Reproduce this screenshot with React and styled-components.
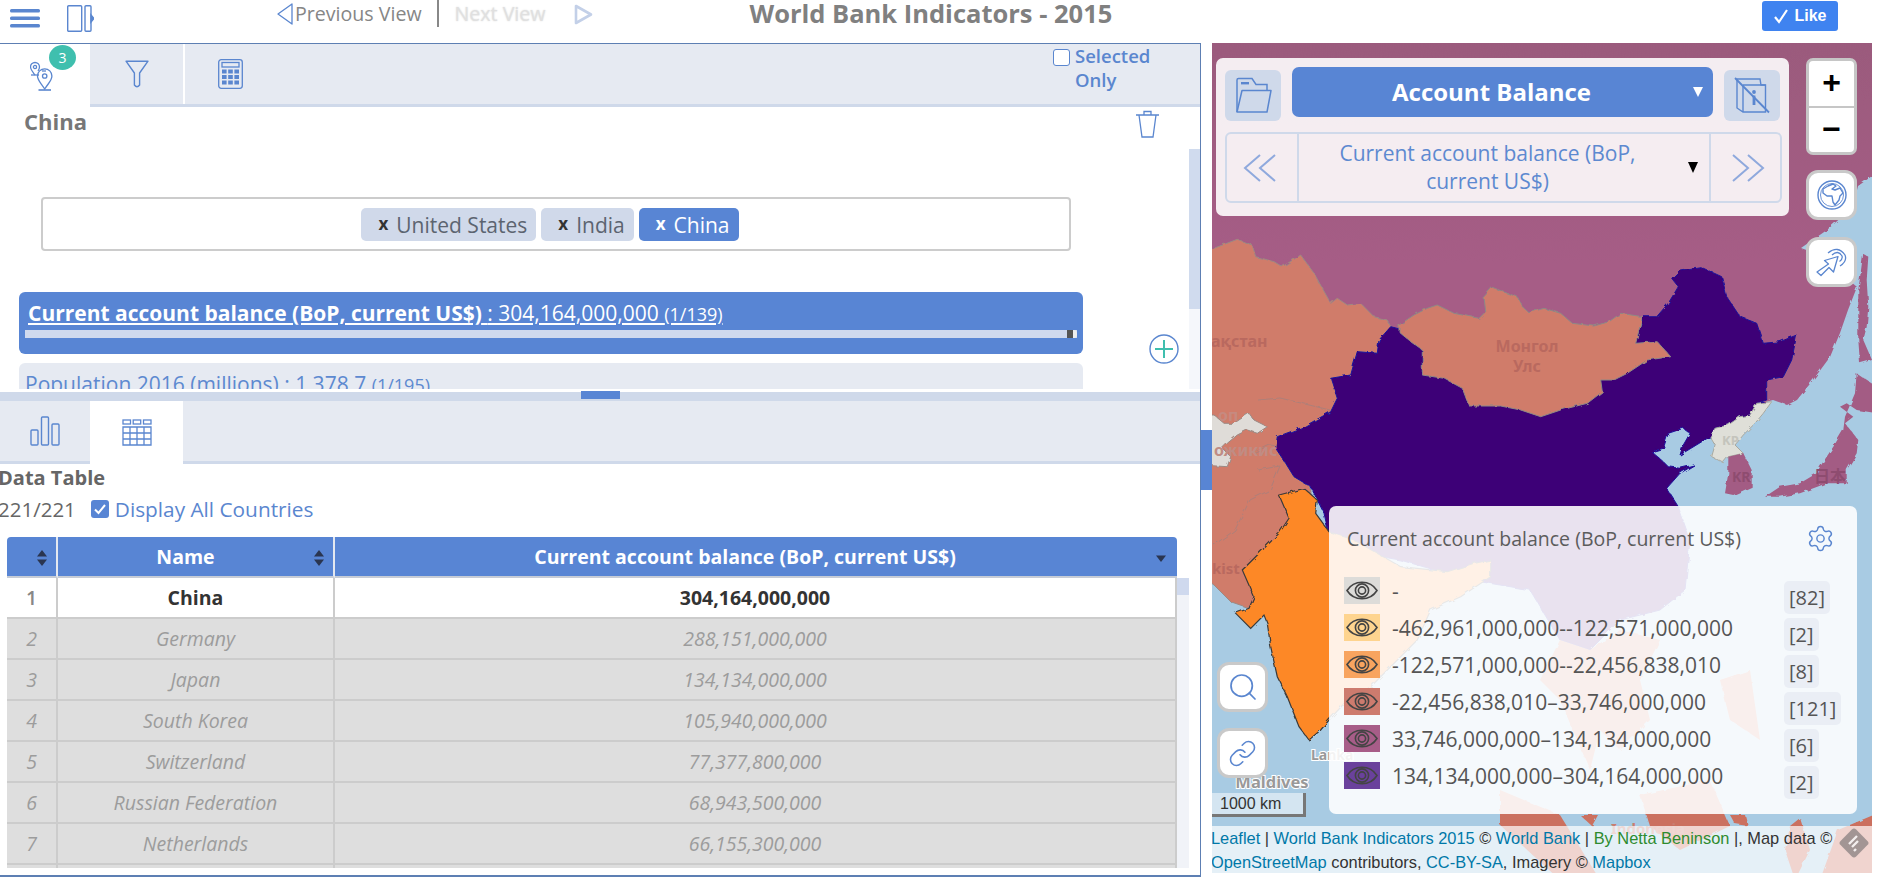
import React from 'react';
import styled, { createGlobalStyle } from 'styled-components';
import { Search, Link, Settings } from 'lucide-react';

const BLUE = '#5885d4';
const ICON = '#5a86cf';
const PALE = '#e6eaf2';
const LINE = '#cfd9ea';

const GlobalStyle = createGlobalStyle`
  html, body {
    margin: 0;
    background: #fff;
    font-family: "Open Sans", sans-serif;
    overflow: hidden;
  }
  * { box-sizing: border-box; }
`;

const Page = styled.div`
  width: 1872px;
`;

/* ---------- top bar ---------- */

const TopBar = styled.header`
  display: flex;
  align-items: flex-start;
  height: 43px;
`;

const MenuIcon = styled.svg`
  margin: 9px 0 0 10px;
`;

const ToggleIcon = styled.svg`
  margin: 5px 0 0 27px;
`;

const ViewNav = styled.nav`
  display: flex;
  align-items: flex-start;
  margin-left: 183px;
  height: 28px;
  font-size: 19.6px;
  line-height: 28px;
`;

const ViewLabel = styled.span`
  color: ${p => (p.$off ? '#e0e0e0' : '#868686')};
  ${p => p.$off && 'text-shadow: 0 0 2px #ddd;'}
`;

const ViewDivider = styled.span`
  width: 2px;
  height: 27px;
  margin: 0 16px 0 15px;
  background: #888;
`;

const PlayIcon = styled.svg`
  margin: 4px 0 0 29px;
  filter: blur(0.6px);
`;

const BackIcon = styled.svg`
  margin: 3px 2px 0 0;
`;

const Title = styled.h1`
  margin: -1px 0 0 156px;
  font-size: 25.5px;
  line-height: 28px;
  font-weight: 700;
  color: #808080;
  white-space: nowrap;
`;

const LikeButton = styled.button`
  display: flex;
  align-items: center;
  justify-content: center;
  gap: 5px;
  width: 76px;
  height: 30px;
  margin: 1px 34px 0 auto;
  padding: 0;
  border: 0;
  border-radius: 3px;
  background: #3f83f0;
  color: #fff;
  font-family: "Liberation Sans", sans-serif;
  font-size: 16px;
  font-weight: 700;
`;

/* ---------- main split ---------- */

const Main = styled.main`
  display: flex;
  align-items: flex-start;
`;

const LeftPanel = styled.section`
  width: 1201px;
  height: 834px;
  border-top: 1px solid #5d7fb3;
  border-right: 1px solid #5d7fb3;
  border-bottom: 2px solid #5d7fb3;
  overflow: hidden;
`;

const Gutter = styled.div`
  width: 11px;
  padding-top: 387px;
`;

const GutterHandle = styled.div`
  height: 60px;
  background: ${BLUE};
`;

const TabBar = styled.div`
  display: flex;
  height: 63px;
  background: ${PALE};
  border-bottom: 3px solid ${LINE};
`;

const Tab = styled.div`
  position: relative;
  display: flex;
  align-items: center;
  justify-content: center;
  width: ${p => p.$width}px;
  height: ${p => (p.$active ? 63 : 60)}px;
  background: ${p => (p.$active ? '#fff' : PALE)};
  border-right: ${p => (p.$gap ? '2px solid #fff' : '0')};
  color: ${ICON};
`;

const Badge = styled.span`
  position: absolute;
  left: 49px;
  top: 1px;
  width: 27px;
  height: 25px;
  border-radius: 50%;
  background: #3fbfae;
  color: #fff;
  font-size: 14px;
  line-height: 25px;
  text-align: center;
`;

const SelectedOnly = styled.label`
  display: flex;
  margin-left: auto;
  width: 147px;
  color: ${ICON};
  font-size: 18.5px;
  font-weight: 600;
  line-height: 24px;
`;

const EmptyBox = styled.span`
  flex: none;
  width: 17px;
  height: 17px;
  margin: 5px 5px 0 0;
  border: 1.5px solid ${ICON};
  border-radius: 3px;
  background: #fff;
`;

/* ---------- upper section ---------- */

const Upper = styled.div`
  display: flex;
  height: 282px;
  overflow: hidden;
`;

const UpperContent = styled.div`
  flex: 1;
  min-width: 0;
`;

const CountryRow = styled.div`
  display: flex;
  justify-content: space-between;
  height: 90px;
  padding: 1px 29px 0 24px;
`;

const CountryName = styled.h2`
  margin: -2px 0 0;
  font-size: 22px;
  line-height: 30px;
  font-weight: 700;
  color: #777;
`;

const TrashIcon = styled.svg`
  margin-top: 2px;
`;

const TagBox = styled.div`
  display: flex;
  justify-content: center;
  gap: 5px;
  width: 1030px;
  height: 54px;
  margin-left: 41px;
  padding-top: 9px;
  padding-right: 12px;
  border: 2px solid #ccc;
  border-radius: 4px;
`;

const Tag = styled.span`
  display: flex;
  align-items: center;
  height: 33px;
  padding: 0 9px 0 17px;
  border-radius: 5px;
  background: ${p => (p.$active ? BLUE : '#d0d9ea')};
  color: ${p => (p.$active ? '#fff' : '#5c6470')};
  font-size: 21px;
  white-space: nowrap;
`;

const TagClose = styled.b`
  margin: -3px 8px 0 0;
  font-size: 17px;
  color: ${p => (p.$active ? '#fff' : '#333')};
`;

const IndicatorArea = styled.div`
  display: flex;
  align-items: flex-start;
  margin: 41px 0 0 19px;
`;

const IndicatorList = styled.div`
  display: flex;
  flex-direction: column;
  gap: 9px;
  width: 1064px;
`;

const IndicatorCard = styled.div`
  height: 62px;
  padding: 7px 0 0 ${p => (p.$active ? 9 : 6)}px;
  border-radius: 6px;
  background: ${p => (p.$active ? BLUE : PALE)};
  color: ${p => (p.$active ? '#fff' : '#5d89d0')};
  font-size: 21px;
  line-height: 28px;
  text-decoration: ${p => (p.$active ? 'underline' : 'none')};
  white-space: nowrap;
`;

const IndicatorName = styled.b`
  font-weight: 700;
`;

const IndicatorRank = styled.small`
  font-size: 18px;
`;

const ProgressBar = styled.div`
  position: relative;
  width: 1052px;
  height: 8px;
  margin: 2px 0 0 -3px;
  background: #cfd9ee;
`;

const ProgressEnd = styled.span`
  position: absolute;
  right: 0;
  top: 0;
  width: 10px;
  height: 8px;
  background: linear-gradient(90deg, #555 0 60%, #eee 60%);
  border-radius: 0 3px 3px 0;
`;

const AddIcon = styled.svg`
  flex: none;
  margin: 42px 0 0 66px;
`;

const ScrollTrack = styled.div`
  flex: none;
  width: 11px;
  margin-top: 42px;
  background: #f5f7fb;
`;

const ScrollThumb = styled.div`
  height: 160px;
  background: #d0dbee;
`;

const Splitter = styled.div`
  position: relative;
  height: 9px;
  margin-top: 3px;
  background: ${LINE};
`;

const SplitHandle = styled.span`
  position: absolute;
  left: 581px;
  top: -1px;
  width: 39px;
  height: 8px;
  background: ${BLUE};
`;

/* ---------- data table ---------- */

const TableTitle = styled.h3`
  margin: 0 0 0 -2px;
  font-size: 20px;
  line-height: 28px;
  font-weight: 700;
  color: #666;
`;

const TableInfo = styled.div`
  display: flex;
  align-items: center;
  height: 28px;
  margin: 3px 0 14px -2px;
  font-size: 20.5px;
  color: #666;
`;

const CheckedBox = styled.svg`
  margin: 0 6px 0 15px;
`;

const InfoLabel = styled.span`
  font-size: 20.8px;
  color: ${ICON};
`;

const TableWrap = styled.div`
  display: flex;
  align-items: flex-start;
  height: 331px;
  margin-left: 7px;
  overflow: hidden;
`;

const Table = styled.table`
  flex: none;
  width: 1170px;
  table-layout: fixed;
  border-collapse: separate;
  border-spacing: 0;
  font-size: 19.5px;
`;

const HeadCell = styled.th`
  position: relative;
  height: 41px;
  padding: 0 ${p => p.$pad || 0}px 0 0;
  background: ${BLUE};
  border-bottom: 2px solid #c6ccd6;
  border-right: 2px solid #e4e8f0;
  color: #fff;
  font-size: 19.5px;
  font-weight: 700;
  &:first-child { border-top-left-radius: 4px; }
  &:last-child { border-right: 0; border-top-right-radius: 4px; }
`;

const SortIcon = styled.svg`
  position: absolute;
  right: ${p => p.$right}px;
  top: ${p => p.$top}px;
`;

const BodyCell = styled.td`
  height: 41px;
  padding: 0;
  text-align: center;
  background: ${p => (p.$top ? '#fff' : '#dedede')};
  color: ${p => (p.$top ? '#333' : '#9c9c9c')};
  font-style: ${p => (p.$top ? 'normal' : 'italic')};
  font-weight: ${p => (p.$top ? 700 : 400)};
  border-bottom: 2px solid #ccc;
  border-right: 2px solid #ccc;
  &:first-child {
    font-weight: ${p => (p.$top ? 600 : 400)};
    color: ${p => (p.$top ? '#888' : '#9c9c9c')};
  }
`;

const TableScroll = styled.div`
  flex: none;
  width: 12px;
  height: 331px;
  padding-top: 41px;
  background: linear-gradient(#fff 41px, #f1f3f8 41px);
`;

const TableThumb = styled.div`
  height: 17px;
  background: #cfd9ee;
`;

/* ---------- map ---------- */

const MapPanel = styled.section`
  position: relative;
  width: 660px;
  height: 830px;
  overflow: hidden;
  background: #a8cbe3;
`;

const MapArt = styled.svg`
  display: block;
`;

const ControlPanel = styled.div`
  position: absolute;
  left: 4px;
  top: 15px;
  width: 573px;
  height: 158px;
  padding: 9px 9px 0 9px;
  border-radius: 7px;
  background: rgba(255, 255, 255, 0.89);
`;

const ControlRow = styled.div`
  display: flex;
  align-items: flex-start;
  gap: 11px;
  height: 65px;
`;

const SquareButton = styled.div`
  display: flex;
  align-items: center;
  justify-content: center;
  flex: none;
  width: 56px;
  height: 51px;
  margin-top: 3px;
  border-radius: 6px;
  background: ${LINE};
  color: ${ICON};
`;

const GroupSelect = styled.div`
  position: relative;
  flex: none;
  width: 421px;
  height: 50px;
  padding-right: 22px;
  border-radius: 7px;
  background: ${BLUE};
  color: #fff;
  font-size: 24px;
  font-weight: 700;
  line-height: 50px;
  text-align: center;
`;

const WhiteCaret = styled.span`
  position: absolute;
  right: 10px;
  top: 20px;
  border-style: solid;
  border-width: 10px 5px 0 5px;
  border-color: #fff transparent transparent transparent;
`;

const IndicatorPicker = styled.div`
  display: flex;
  width: 557px;
  height: 71px;
  border: 2px solid ${LINE};
  border-radius: 6px;
`;

const PickerArrow = styled.div`
  display: flex;
  align-items: center;
  justify-content: center;
  flex: none;
  width: ${p => p.$width}px;
  color: #8fa9dd;
  ${p => (p.$left
    ? `border-right: 2px solid ${LINE}; padding-right: 5px;`
    : `border-left: 2px solid ${LINE}; padding-left: 5px;`)}
`;

const PickerText = styled.div`
  flex: 1;
  padding: 5px 12px 0 0;
  color: #5d89d0;
  font-size: 21px;
  line-height: 28px;
  text-align: center;
`;

const BlackCaret = styled.span`
  flex: none;
  align-self: center;
  margin-right: 11px;
  border-style: solid;
  border-width: 11px 5px 0 5px;
  border-color: #000 transparent transparent transparent;
`;

const ZoomBox = styled.div`
  position: absolute;
  left: 594px;
  top: 15px;
  display: flex;
  flex-direction: column;
  width: 51px;
  height: 97px;
  border: 3px solid #c6c6c6;
  border-radius: 7px;
  background: #fff;
`;

const ZoomButton = styled.div`
  flex: 1;
  color: #000;
  font-family: "Liberation Sans", sans-serif;
  font-size: 32px;
  font-weight: 700;
  line-height: 42px;
  text-align: center;
  & + & { border-top: 2px solid #c6c6c6; }
`;

const MapButton = styled.div`
  position: absolute;
  left: ${p => p.$left}px;
  top: ${p => p.$top}px;
  display: flex;
  align-items: center;
  justify-content: center;
  width: 51px;
  height: 50px;
  border: 3px solid #c9c9c9;
  border-radius: 12px;
  background: #fff;
  color: ${ICON};
`;

const Legend = styled.aside`
  position: absolute;
  left: 117px;
  top: 463px;
  width: 528px;
  height: 308px;
  padding: 0 15px;
  border-radius: 7px;
  background: rgba(255, 255, 255, 0.885);
  color: #555;
`;

const LegendHead = styled.div`
  display: flex;
  align-items: center;
  justify-content: space-between;
  height: 64px;
  padding: 0 7px 0 3px;
  margin-bottom: 7px;
  font-size: 19.5px;
  color: #5c5c5c;
`;

const GearIcon = styled(Settings)`
  color: ${ICON};
`;

const LegendRows = styled.div`
  display: flex;
  flex-direction: column;
  gap: 10px;
`;

const LegendRow = styled.div`
  display: grid;
  grid-template-columns: 36px 395px auto;
  column-gap: 12px;
  height: 27px;
`;

const Swatch = styled.span`
  display: flex;
  align-items: center;
  justify-content: center;
  height: 27px;
  background: ${p => p.$color};
`;

const LegendLabel = styled.span`
  padding-top: 1px;
  font-size: 21px;
  line-height: 26px;
  white-space: nowrap;
`;

const LegendCount = styled.span`
  justify-self: start;
  margin: 4px 0 0 -15px;
  height: 33px;
  padding: 0 5px;
  border-radius: 5px;
  background: #eaeef5;
  font-size: 20px;
  line-height: 33px;
`;

const ScaleBar = styled.div`
  position: absolute;
  left: 0;
  top: 750px;
  width: 94px;
  height: 24px;
  padding-left: 8px;
  border-right: 3px solid #777;
  border-bottom: 3px solid #777;
  background: rgba(255, 255, 255, 0.5);
  color: #333;
  font-family: "Liberation Sans", sans-serif;
  font-size: 16px;
  line-height: 21px;
`;

const Attribution = styled.footer`
  position: absolute;
  left: 0;
  right: 0;
  bottom: 0;
  height: 47px;
  background: rgba(255, 255, 255, 0.7);
  color: #333;
  font-family: "Liberation Sans", sans-serif;
  font-size: 16.4px;
  line-height: 24px;
  white-space: nowrap;
`;

const AttributionLine = styled.div`
  margin-left: -1px;
`;

const MapLink = styled.a`
  color: ${p => (p.$green ? '#2e8b2e' : '#0078a8')};
`;

const FeedbackTag = styled.svg`
  position: absolute;
  right: 0;
  bottom: 14px;
`;

/* ---------- icons ---------- */

const stroke = { fill: 'none', stroke: 'currentColor' };

const PinsIcon = () => (
  <svg width="30" height="30" viewBox="0 0 30 30" {...stroke} strokeWidth="1.3" style={{ margin: '0 0 0 -1px' }}>
    <path d="M5 14 C2 10 0.5 8.5 0.5 6 A4.5 4.5 0 0 1 9.5 6 C9.5 7.5 9 8.5 8 10" />
    <circle cx="5" cy="6" r="1.6" />
    <path d="M1 14 H9" />
    <path d="M14.7 28 C11 22 7.5 19.5 7.5 15 A7.2 7.2 0 0 1 21.9 15 C21.9 19.5 18.5 22 14.7 28 Z" />
    <circle cx="14.7" cy="15" r="2.2" />
    <path d="M8.5 29 H21" strokeWidth="1.6" />
    <path d="M12 10 H16" />
  </svg>
);

const FunnelIcon = () => (
  <svg width="24" height="28" viewBox="0 0 24 28" {...stroke} strokeWidth="1.4">
    <path d="M1 1.2 H23 L14.6 13 V25 Q12 28.5 9.4 25 V13 Z" strokeLinejoin="round" />
  </svg>
);

const CalcIcon = () => (
  <svg width="25" height="30" viewBox="0 0 25 30" {...stroke} strokeWidth="1.3">
    <rect x="0.7" y="0.7" width="23.6" height="28.6" rx="2.5" />
    <rect x="4" y="3.5" width="17" height="4.5" />
    {[10.5, 16, 21.5].map(y =>
      [4, 10.2, 16.4].map(x => <rect key={`${x}-${y}`} x={x} y={y} width="4.6" height="4" fill="currentColor" stroke="none" />)
    )}
  </svg>
);

const BarsIcon = () => (
  <svg width="30" height="30" viewBox="0 0 30 30" {...stroke} strokeWidth="1.4">
    <rect x="1" y="14" width="7" height="15" rx="1" />
    <rect x="11.5" y="1" width="7" height="28" rx="1" />
    <rect x="22" y="8" width="7" height="21" rx="1" />
  </svg>
);

const GridIcon = () => (
  <svg width="30" height="27" viewBox="0 0 30 27" {...stroke} strokeWidth="1.3">
    <path d="M1 8 H29 V26 H1 Z M1 14 H29 M1 20 H29 M8 8 V26 M15 8 V26 M22 8 V26" />
    <rect x="1" y="1" width="7.5" height="4" />
    <rect x="11.2" y="1" width="7.5" height="4" />
    <rect x="21.5" y="1" width="7.5" height="4" />
  </svg>
);

const FolderIcon = () => (
  <svg width="37" height="37" viewBox="0 0 37 37" {...stroke} strokeWidth="1.5">
    <path d="M2 35 V3 Q2 1.5 3.5 1.5 H17 L21 7.5 H32 V13" />
    <path d="M2 35 L7 13.5 H36 L32 35 Z" strokeLinejoin="round" />
    <rect x="6" y="5" width="8" height="2.4" fill="currentColor" stroke="none" />
  </svg>
);

const SheetsIcon = () => (
  <svg width="36" height="37" viewBox="0 0 36 37" {...stroke} strokeWidth="1.4">
    <path d="M3 2 H26 L27 8 H31.5 V35 H9 L3 31 Z" />
    <path d="M9 8 H31.5 M9 8 V35" />
    <path d="M1 1 L35 35.5" strokeWidth="1.8" />
    <circle cx="20" cy="15" r="1.9" fill="currentColor" stroke="none" />
    <rect x="18.6" y="18.5" width="2.8" height="9.5" fill="currentColor" stroke="none" />
  </svg>
);

const Chevrons = ({ flip }) => (
  <svg width="33" height="28" viewBox="0 0 33 28" {...stroke} strokeWidth="2" style={flip ? { transform: 'scaleX(-1)' } : undefined}>
    <path d="M17 1 L2 14 L17 27 M32 1 L17 14 L32 27" />
  </svg>
);

const GlobeIcon = () => (
  <svg width="30" height="30" viewBox="0 0 30 30" {...stroke} strokeWidth="1.4">
    <circle cx="15" cy="15" r="14" />
    <circle cx="15" cy="15" r="11.5" strokeWidth="0.9" />
    <path d="M6 9 L11 6 L16 4 L19 6 L15 9 L18 10 L23 8 L26 13 L23 16 L22 20 L18 25 L16 22 L15 16 L10 16 L6 13 Z" strokeLinejoin="round" />
  </svg>
);

const CursorIcon = () => (
  <svg width="33" height="29" viewBox="0 0 33 29" {...stroke} strokeWidth="1.3">
    <path d="M2 24 L6 27.5 L14 19.5 L18.5 24 L23 8.5 L9.5 12.5 L13.5 16 Z" strokeLinejoin="round" />
    <path d="M17 7 Q23 1.5 27 8 Q28 11 24.5 13.5" />
    <path d="M13 5 Q23 -3 30 7 Q32.5 13 25 18" />
  </svg>
);

const EyeIcon = () => (
  <svg width="32" height="19" viewBox="0 0 32 19" fill="none" stroke="#444" strokeWidth="1.6">
    <path d="M1 9.5 C8 -1.5 24 -1.5 31 9.5 C24 20.5 8 20.5 1 9.5 Z" />
    <circle cx="16" cy="9.5" r="6.6" />
    <circle cx="16" cy="9.5" r="3.6" />
  </svg>
);

const SortArrows = ({ right, onlyDown }) => (
  <SortIcon $right={right} $top={onlyDown ? 8 : 12} width="12" height="18" viewBox="0 0 12 18" fill="#2a3550">
    {!onlyDown && <path d="M6 1 L11 7.5 H1 Z" />}
    <path d="M1 10.5 H11 L6 17 Z" />
  </SortIcon>
);

/* ---------- map drawing, traced from page coordinates ---------- */

const from = (ox, oy, list) => list.map(([x, y]) => `${(ox + x / 3).toFixed(1)},${(oy + y / 3).toFixed(1)}`).join(' ');

const RUSSIA = '1200,30 1885,30 1885,170 1872,176 1858,186 1853,207 1827,230 1801,248 1820,255 1857,287 1848,310 1840,333 1830,357 1813,380 1797,400 1787,405 1773,400 1700,420 1500,420 1200,300';

const WEST = from(1214, 200, [
  [-40, 145], [0, 145], [70, 118], [115, 135], [125, 170], [180, 185], [205, 200], [260, 165], [300, 220], [350, 310], [370, 295], [400, 315], [440, 310],
  [480, 350], [520, 360], [530, 380], [495, 420], [490, 460], [430, 455], [410, 525], [350, 535], [370, 595], [350, 635], [270, 680],
  [190, 710], [185, 745], [215, 790], [240, 830], [290, 860], [300, 1100], [150, 1240], [50, 1205], [0, 1155], [-40, 1125],
]);

const CHINA = [
  from(1214, 200, [
    [530, 380], [495, 420], [490, 460], [430, 455], [410, 525], [350, 535], [370, 595], [350, 635], [270, 680], [190, 710], [185, 745],
    [215, 790], [240, 830], [290, 860], [310, 900], [330, 940],
  ]),
  '1332,548 1400,560 1470,580 1530,590 1560,640 1590,650 1620,620 1660,610 1685,590 1690,540',
  from(1600, 40, [
    [235, 1400], [200, 1345], [240, 1300], [282, 1275], [240, 1285], [205, 1280], [190, 1265], [155, 1235], [190, 1225], [205, 1180], [250, 1165],
    [270, 1180], [250, 1215], [240, 1245], [330, 1190], [345, 1165], [385, 1155], [420, 1130], [450, 1125], [470, 1090], [500, 1080],
    [500, 1020], [550, 1010], [575, 960], [590, 885], [540, 905], [490, 910], [470, 850], [420, 830],
    [380, 770], [365, 710], [300, 680], [240, 690], [215, 715], [235, 740], [205, 790], [170, 830], [130, 830], [105, 905],
  ]),
  from(1214, 200, [[1000, 500]]),
].join(' ');

const MONGOLIA = from(1214, 200, [
  [555, 375], [600, 345], [640, 325], [670, 315], [720, 340], [795, 355], [815, 335], [810, 290], [835, 262], [880, 280], [910, 290], [925, 320],
  [945, 338], [990, 325], [1040, 340], [1075, 370], [1140, 378], [1185, 365], [1220, 340], [1285, 350], [1265, 430], [1330, 425], [1370, 470],
  [1300, 480], [1240, 520], [1200, 540], [1160, 540], [1165, 575], [1120, 610], [1040, 630], [980, 650], [920, 630], [860, 618], [765, 618],
  [745, 565], [690, 535], [625, 525], [625, 450], [590, 425], [555, 395],
]);

const NORTH_KOREA = from(1600, 40, [
  [330, 1190], [345, 1165], [385, 1155], [420, 1130], [450, 1125], [470, 1090], [515, 1085], [490, 1120], [465, 1150], [430, 1185], [405, 1215],
  [430, 1240], [385, 1250], [370, 1268], [335, 1250], [345, 1215],
]);

const SOUTH_KOREA = from(1600, 40, [[385, 1250], [430, 1240], [455, 1290], [455, 1340], [400, 1365], [375, 1360], [385, 1300]]);

const SAKHALIN = from(1600, 40, [[790, 640], [805, 650], [800, 720], [805, 800], [800, 860], [790, 900], [816, 960], [780, 970], [775, 900], [775, 750]]);

const JAPAN = from(1600, 40, [
  [770, 1000], [830, 1040], [830, 1120], [770, 1110], [740, 1090], [720, 1100], [760, 1130], [735, 1150], [775, 1200], [770, 1240], [740, 1290],
  [740, 1330], [680, 1330], [640, 1345], [600, 1360], [540, 1370], [495, 1370], [540, 1340], [600, 1330], [650, 1300], [660, 1280], [700, 1220],
  [730, 1170], [735, 1130], [765, 1060],
]);

const UZBEK = from(1214, 200, [
  [-40, 645], [0, 645], [30, 670], [60, 670], [105, 640], [120, 660], [160, 680], [130, 700], [100, 690], [70, 705], [40, 730], [25, 745], [50, 770], [40, 800], [-40, 795],
]);

const INDIA = from(1214, 500, [
  [195, -15], [270, -35], [310, 0], [305, 40], [345, 95], [420, 120], [560, 200], [700, 215], [780, 190], [830, 180], [830, 230], [740, 290], [650, 330],
  [610, 420], [470, 560], [400, 600], [345, 660], [320, 690], [285, 720], [255, 680], [220, 590], [190, 530], [170, 440], [160, 370], [150, 345],
  [110, 385], [65, 340], [105, 325], [120, 290], [85, 210], [110, 185], [195, 100], [225, 55],
]);

const ISLANDS = [
  '1560,640 1590,650 1620,630 1660,640 1640,680 1650,720 1620,750 1600,730 1590,770 1560,700 1540,680',
  '1500,790 1560,815 1600,880 1560,880 1500,825',
  '1640,795 1710,780 1730,826 1680,850 1650,826',
  '1720,680 1750,670 1760,740 1730,720',
  '1515,815 1545,815 1540,826 1522,824',
  '1580,815 1598,815 1592,826',
  '1665,815 1688,815 1680,826 1668,826',
  '1730,815 1745,815 1748,826 1735,824',
  '1790,826 1800,818 1810,850 1795,880 1785,850',
  '1838,830 1885,810 1885,880 1820,880',
];

const MapDrawing = () => (
  <MapArt width="660" height="830" viewBox="1212 43 660 830" fontFamily='"Noto Sans", sans-serif' fontWeight="700">
    <defs>
      <linearGradient id="russiaTone" x1="0" y1="0" x2="0" y2="1">
        <stop offset="0" stopColor="#9a5a7c" />
        <stop offset="0.6" stopColor="#a65d86" />
      </linearGradient>
      <filter id="rough" x="-5%" y="-5%" width="110%" height="110%">
        <feTurbulence type="fractalNoise" baseFrequency="0.14" numOctaves="2" seed="4" />
        <feDisplacementMap in="SourceGraphic" scale="4" />
      </filter>
    </defs>
    <g filter="url(#rough)">
      <polygon points={RUSSIA} fill="url(#russiaTone)" />
      <polygon points={WEST} fill="#d07b6b" stroke="#9b8a84" />
      <polygon points={UZBEK} fill="#dfdcd8" stroke="#9b8a84" />
      <path d="M1258 400 L1280 398 L1330 410 M1255 452 L1270 445 L1290 448 M1258 470 L1280 466 L1270 490 L1250 500 L1235 530 L1214 545" fill="none" stroke="#ae8078" />
      <polygon points={CHINA} fill="#3c0077" stroke="#1c119c" />
      <polygon points={MONGOLIA} fill="#d07b6b" stroke="#8d8a86" />
      <polygon points={NORTH_KOREA} fill="#dfdfd8" stroke="#a9a9a0" />
      <polygon points={SOUTH_KOREA} fill="#a35c84" />
      <polygon points={SAKHALIN} fill="#a35c84" />
      <polygon points={JAPAN} fill="#a35c84" />
      {ISLANDS.map(points => <polygon key={points} points={points} fill="#cb705e" />)}
      <polygon points={INDIA} fill="#fd8827" stroke="#3a3a3a" strokeWidth="1.2" />
    </g>
    <g fill="#b9695f" fontSize="16">
      <text x="1211" y="347">ақстан</text>
      <text x="1527" y="352" textAnchor="middle">Монгол</text>
      <text x="1527" y="372" textAnchor="middle">Улс</text>
      <text x="1218" y="421" fill="#c68a80">оп</text>
      <text x="1214" y="456" fill="#c08c84">ожикис</text>
      <text x="1212" y="574" fontSize="15">kist</text>
    </g>
    <g fill="#8e4c70" fontSize="14">
      <text x="1732" y="482">KR</text>
      <text x="1814" y="482" fontFamily='"Noto Sans CJK JP", sans-serif' fontSize="16">日本</text>
    </g>
    <text x="1722" y="445" fill="#c4c4bc" fontSize="13">KP</text>
    <text x="1272" y="788" fill="#999" fontSize="16.5" textAnchor="middle" stroke="#fff" strokeWidth="2" paintOrder="stroke">Maldives</text>
    <text x="1311" y="760" fill="#999" fontSize="14" stroke="#fff" strokeWidth="2" paintOrder="stroke">Lanka</text>
    <text x="1648" y="834" fill="#c97d70" fontSize="15" textAnchor="middle">Indonesia</text>
  </MapArt>
);

/* ---------- data ---------- */

const TAGS = [
  { name: 'United States' },
  { name: 'India' },
  { name: 'China', active: true },
];

const ROWS = [
  ['China', '304,164,000,000'],
  ['Germany', '288,151,000,000'],
  ['Japan', '134,134,000,000'],
  ['South Korea', '105,940,000,000'],
  ['Switzerland', '77,377,800,000'],
  ['Russian Federation', '68,943,500,000'],
  ['Netherlands', '66,155,300,000'],
];

const LEGEND = [
  { color: '#dddcd9', label: '-', count: '[82]' },
  { color: '#fed48f', label: '-462,961,000,000--122,571,000,000', count: '[2]' },
  { color: '#f8a45f', label: '-122,571,000,000--22,456,838,010', count: '[8]' },
  { color: '#cd7b6e', label: '-22,456,838,010–33,746,000,000', count: '[121]' },
  { color: '#a75d88', label: '33,746,000,000–134,134,000,000', count: '[6]' },
  { color: '#6a419c', label: '134,134,000,000–304,164,000,000', count: '[2]' },
];

export default function App() {
  return (
    <Page>
      <GlobalStyle />
      <TopBar>
        <MenuIcon width="30" height="20" viewBox="0 0 30 20" fill={ICON}>
          <rect y="0" width="30" height="3.4" rx="1.5" />
          <rect y="7.5" width="30" height="3.4" rx="1.5" />
          <rect y="15" width="30" height="3.4" rx="1.5" />
        </MenuIcon>
        <ToggleIcon width="27" height="27" viewBox="0 0 27 27" fill="none" stroke={ICON} strokeWidth="1.4">
          <rect x="0.7" y="0.7" width="14" height="25.6" rx="1" />
          <rect x="18" y="0.7" width="6" height="25.6" rx="1" />
          <path d="M24 10 L27 13.5 L24 17 Z" fill={ICON} />
        </ToggleIcon>
        <ViewNav>
          <BackIcon width="16" height="22" viewBox="0 0 16 22" fill="none" stroke={ICON} strokeWidth="1.3">
            <path d="M15 1 L1 11 L15 21 Z" strokeLinejoin="round" />
          </BackIcon>
          <ViewLabel>Previous View</ViewLabel>
          <ViewDivider />
          <ViewLabel $off>Next View</ViewLabel>
          <PlayIcon width="19" height="21" viewBox="0 0 19 21" fill="none" stroke="#c3d0e8" strokeWidth="2.6">
            <path d="M2 2 L17 10.5 L2 19 Z" strokeLinejoin="round" />
          </PlayIcon>
        </ViewNav>
        <Title>World Bank Indicators - 2015</Title>
        <LikeButton>
          <svg width="16" height="16" viewBox="0 0 16 16" fill="none" stroke="#fff" strokeWidth="2.2">
            <path d="M2 9 L6 14 L14 2" />
          </svg>
          Like
        </LikeButton>
      </TopBar>

      <Main>
        <LeftPanel>
          <TabBar>
            <Tab $width={90} $active>
              <PinsIcon />
              <Badge>3</Badge>
            </Tab>
            <Tab $width={95} $gap>
              <FunnelIcon />
            </Tab>
            <Tab $width={90}>
              <CalcIcon />
            </Tab>
            <SelectedOnly>
              <EmptyBox />
              <span>Selected<br />Only</span>
            </SelectedOnly>
          </TabBar>

          <Upper>
            <UpperContent>
              <CountryRow>
                <CountryName>China</CountryName>
                <TrashIcon width="25" height="28" viewBox="0 0 25 28" fill="none" stroke={ICON} strokeWidth="1.3">
                  <path d="M1 5 H24 M9 5 V1.5 H16 V5 M4 5 L7 27 H18 L21 5" />
                </TrashIcon>
              </CountryRow>
              <TagBox>
                {TAGS.map(tag => (
                  <Tag key={tag.name} $active={tag.active}>
                    <TagClose $active={tag.active}>x</TagClose>
                    {tag.name}
                  </Tag>
                ))}
              </TagBox>
              <IndicatorArea>
                <IndicatorList>
                  <IndicatorCard $active>
                    <IndicatorName>Current account balance (BoP, current US$)</IndicatorName>
                    {' '}: 304,164,000,000 <IndicatorRank>(1/139)</IndicatorRank>
                    <ProgressBar>
                      <ProgressEnd />
                    </ProgressBar>
                  </IndicatorCard>
                  <IndicatorCard>
                    Population 2016 (millions) : 1,378.7 <IndicatorRank>(1/195)</IndicatorRank>
                  </IndicatorCard>
                </IndicatorList>
                <AddIcon width="30" height="30" viewBox="0 0 30 30" fill="none" strokeWidth="1.4">
                  <circle cx="15" cy="15" r="14" stroke={ICON} />
                  <path d="M15 6 V24 M6 15 H24" stroke="#3fbfae" strokeWidth="2" />
                </AddIcon>
              </IndicatorArea>
            </UpperContent>
            <ScrollTrack>
              <ScrollThumb />
            </ScrollTrack>
          </Upper>

          <Splitter>
            <SplitHandle />
          </Splitter>

          <TabBar>
            <Tab $width={90}>
              <BarsIcon />
            </Tab>
            <Tab $width={93} $active>
              <GridIcon />
            </Tab>
          </TabBar>

          <TableTitle>Data Table</TableTitle>
          <TableInfo>
            221/221
            <CheckedBox width="18" height="18" viewBox="0 0 18 18">
              <rect width="18" height="18" rx="3" fill={BLUE} />
              <path d="M4 9.5 L7.5 13 L14 5" fill="none" stroke="#fff" strokeWidth="2" />
            </CheckedBox>
            <InfoLabel>Display All Countries</InfoLabel>
          </TableInfo>

          <TableWrap>
            <Table>
              <colgroup>
                <col width="51" />
                <col width="277" />
                <col width="842" />
              </colgroup>
              <thead>
                <tr>
                  <HeadCell>
                    <SortArrows right={8} />
                  </HeadCell>
                  <HeadCell $pad={20}>
                    Name
                    <SortArrows right={8} />
                  </HeadCell>
                  <HeadCell $pad={22}>
                    Current account balance (BoP, current US$)
                    <SortArrows right={10} onlyDown />
                  </HeadCell>
                </tr>
              </thead>
              <tbody>
                {ROWS.map(([name, value], i) => (
                  <tr key={name}>
                    <BodyCell $top={i === 0}>{i + 1}</BodyCell>
                    <BodyCell $top={i === 0}>{name}</BodyCell>
                    <BodyCell $top={i === 0}>{value}</BodyCell>
                  </tr>
                ))}
                <tr>
                  <BodyCell />
                  <BodyCell />
                  <BodyCell />
                </tr>
              </tbody>
            </Table>
            <TableScroll>
              <TableThumb />
            </TableScroll>
          </TableWrap>
        </LeftPanel>

        <Gutter>
          <GutterHandle />
        </Gutter>

        <MapPanel>
          <MapDrawing />

          <ControlPanel>
            <ControlRow>
              <SquareButton>
                <FolderIcon />
              </SquareButton>
              <GroupSelect>
                Account Balance
                <WhiteCaret />
              </GroupSelect>
              <SquareButton>
                <SheetsIcon />
              </SquareButton>
            </ControlRow>
            <IndicatorPicker>
              <PickerArrow $width={72} $left>
                <Chevrons />
              </PickerArrow>
              <PickerText>Current account balance (BoP,<br />current US$)</PickerText>
              <BlackCaret />
              <PickerArrow $width={71}>
                <Chevrons flip />
              </PickerArrow>
            </IndicatorPicker>
          </ControlPanel>

          <ZoomBox>
            <ZoomButton>+</ZoomButton>
            <ZoomButton>−</ZoomButton>
          </ZoomBox>
          <MapButton $left={594} $top={127}>
            <GlobeIcon />
          </MapButton>
          <MapButton $left={594} $top={194}>
            <CursorIcon />
          </MapButton>
          <MapButton $left={5} $top={619}>
            <Search size={32} strokeWidth={1.3} />
          </MapButton>
          <MapButton $left={5} $top={685}>
            <Link size={29} strokeWidth={1.3} />
          </MapButton>

          <Legend>
            <LegendHead>
              Current account balance (BoP, current US$)
              <GearIcon size={29} strokeWidth={1.2} />
            </LegendHead>
            <LegendRows>
              {LEGEND.map(row => (
                <LegendRow key={row.color}>
                  <Swatch $color={row.color}>
                    <EyeIcon />
                  </Swatch>
                  <LegendLabel>{row.label}</LegendLabel>
                  <LegendCount>{row.count}</LegendCount>
                </LegendRow>
              ))}
            </LegendRows>
          </Legend>

          <ScaleBar>1000 km</ScaleBar>

          <Attribution>
            <AttributionLine>
              <MapLink>Leaflet</MapLink> | <MapLink>World Bank Indicators 2015</MapLink> © <MapLink>World Bank</MapLink> | <MapLink $green>By Netta Beninson</MapLink> |, Map data ©
            </AttributionLine>
            <AttributionLine>
              <MapLink>OpenStreetMap</MapLink> contributors, <MapLink>CC-BY-SA</MapLink>, Imagery © <MapLink>Mapbox</MapLink>
            </AttributionLine>
          </Attribution>

          <FeedbackTag width="36" height="32" viewBox="0 0 36 32">
            <rect x="7" y="5" width="22" height="22" rx="3" fill="#8f8585" opacity="0.8" transform="rotate(45 18 16)" />
            <path d="M13 17 L21 9 M16 20 L22 14 M18 24 L20 22" stroke="#f3eeee" strokeWidth="2.4" />
          </FeedbackTag>
        </MapPanel>
      </Main>
    </Page>
  );
}
